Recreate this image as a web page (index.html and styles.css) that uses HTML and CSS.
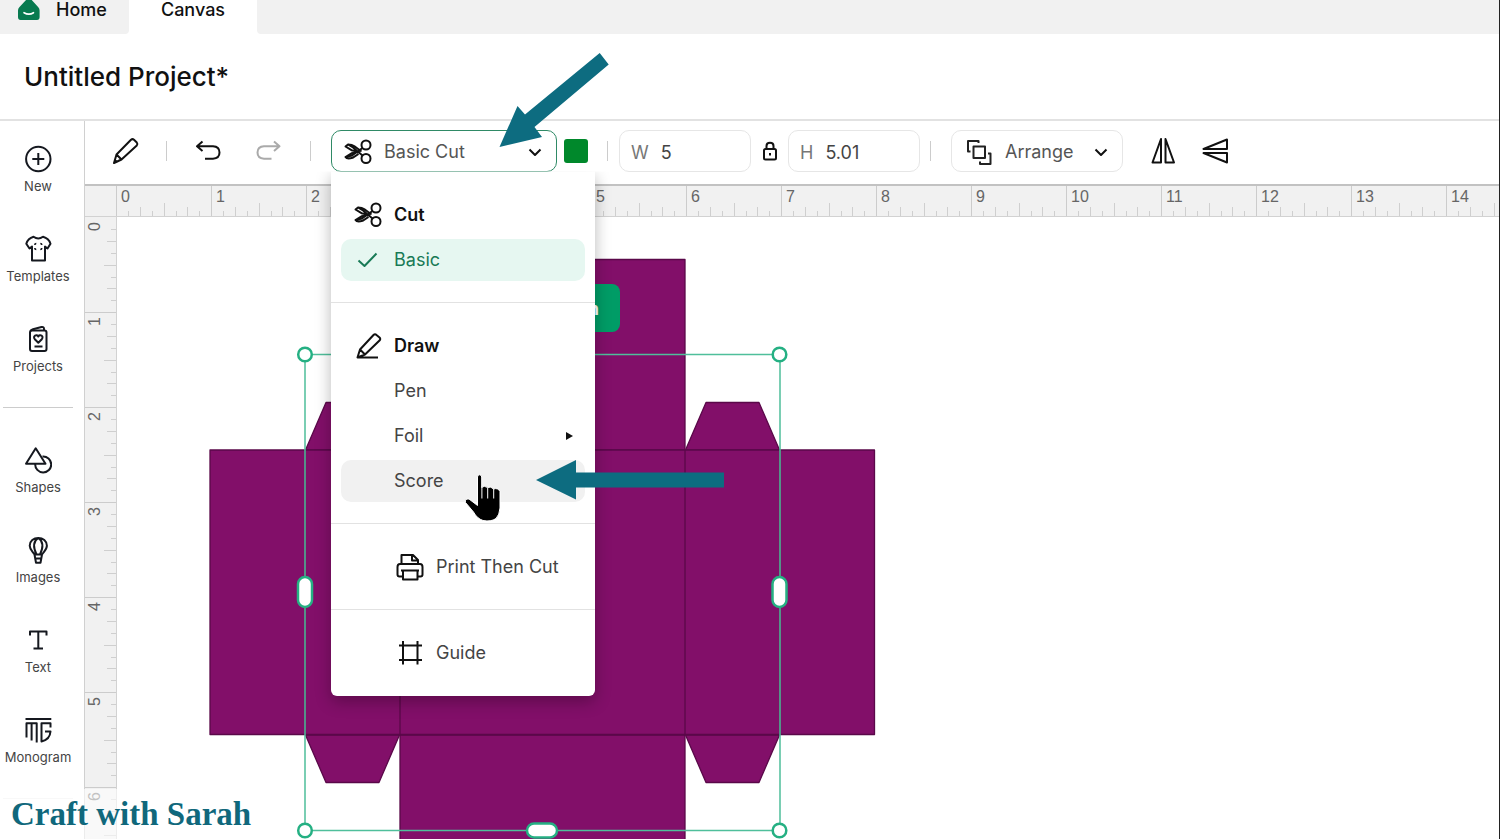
FILE: index.html
```html
<!DOCTYPE html>
<html lang="en">
<head>
<meta charset="utf-8">
<title>Untitled Project</title>
<link rel="stylesheet" href="styles.css">
</head>
<body>
<nav class="tabs" aria-label="Workspace">
  <a class="tab tab-home" href="#home">
    <svg class="home-logo" viewBox="0 0 22 26" aria-hidden="true"><path fill="#087a50" d="M0 16.500Q0 14.500 1.300 13.200L8.500 5.500Q11 3.500 13.300 5.500L20.300 13.200Q21.600 14.500 21.600 16.500V23Q21.600 26 19 26H2.600Q0 26 0 23Z"/><path d="M6 18.700q5 2.800 9.500 0" fill="none" stroke="#fff" stroke-width="1.600" stroke-linecap="round"/></svg>
    Home
  </a>
  <a class="tab tab-active" href="#canvas">Canvas</a>
  <span class="tab-rest"></span>
</nav>
<header class="titlebar"><h1 class="title">Untitled Project*</h1></header>

<div class="workspace">
  <aside class="sidebar">
    <button class="tool"><svg viewBox="0 0 28 28"><circle cx="14.300" cy="14" r="12.200"/><path d="M14.300 8v12M8.300 14h12"/></svg>New</button>
    <button class="tool"><svg viewBox="0 0 28 28"><path d="M8 13v-1.500l-2.500 2L2.300 8.700Q4 3.500 9.500 1.800Q14.300 5.200 19 1.800Q24.800 3.500 26.500 8.700L23.500 13.500L21 11.500V25.500H8Z"/><path stroke-width="1.600" d="M10.800 10q0-1.500 1.500-1.500M16.300 8.500q1.500 0 1.500 1.500M10.800 13q0 1.500 1.500 1.500M16.300 14.500q1.500 0 1.500-1.500"/></svg>Templates</button>
    <button class="tool"><svg viewBox="0 0 28 28"><rect x="6" y="5.500" width="16.500" height="20.500" rx="2"/><path d="M6.500 6Q7 5 9 4.300L17.500 2Q20 1.500 20 4v1.500M10.500 21.500h8M14.300 17.700l-3.500-3.500c-2.500-3.300 2-5.500 3.500-2.700c1.500-2.800 6-.6 3.500 2.700Z"/></svg>Projects</button>
    <hr class="tool-rule">
    <button class="tool"><svg viewBox="0 0 28 28"><path d="M11.700 2.300L2 17.700H21.500Z"/><path d="M18.500 10.500A8 8 0 1 1 11.200 18"/></svg>Shapes</button>
    <button class="tool"><svg viewBox="0 0 28 28"><path d="M10.500 18.500C8.500 15.500 5.700 13.500 5.700 9.800C5.700 5 9.700 2 14.300 2S22.900 5 22.900 9.800C22.900 13.500 20 15.500 18 18.500ZM12.500 18.500C9 11 9.500 5 14.300 2C19 5 19.500 11 16 18.500M10.500 18.500l1.500 8.300h4.500L18 18.500M11.500 22.500h5.500"/></svg>Images</button>
    <button class="tool"><svg viewBox="0 0 28 28"><path d="M6 9.500V5.500H22.500v4M14.300 5.500V22.500M9.500 22.500h9.500"/></svg>Text</button>
    <button class="tool"><svg viewBox="0 0 28 28"><path d="M1.500 3H27.300M2.500 21.500V7.300H12.700V26.500M7.600 24.500V7.300M26.500 11.500V7.300H17.500V25.500Q26 23.500 26.500 15.500H21"/></svg>Monogram</button>
    <hr class="tool-rule tool-rule-faint">
  </aside>

  <main class="main">
    <div class="toolbar">
      <button class="icon-btn" aria-label="Edit"><svg viewBox="0 0 28 28"><path d="M2 26L4.500 17.500L19 2.800Q20.500 1.500 22 2.800L24.800 5.500Q26 7 24.800 8.500L9.500 22.500ZM4.500 17.500L9.500 22.500M3 23l2 2"/></svg></button>
      <span class="sep"></span>
      <button class="icon-btn undo" aria-label="Undo"><svg viewBox="0 0 28 28"><path d="M8.500 4.500L3 9.300L8.500 14M3 9.300H19Q25.500 9.700 25.500 15.500T19 21.700H11"/></svg></button>
      <button class="icon-btn redo" aria-label="Redo"><svg viewBox="0 0 28 28"><path d="M20 4.500L25.500 9.300L20 14M25.500 9.300H10Q3.500 9.700 3.500 15.500T10 21.700H17.500"/></svg></button>
      <span class="sep"></span>
      <div class="operation">
        <button class="select operation-btn" aria-haspopup="menu" aria-expanded="true">
          <svg class="scissors" viewBox="0 0 28 26"><use href="#scissors"/></svg>
          Basic Cut
          <svg class="chevron" viewBox="0 0 14 10"><path d="M1.500 2.500L7 8L12.500 2.500"/></svg>
        </button>
        <div class="menu" role="menu">
          <div class="menu-group">
            <button class="item item-head"><svg class="scissors" viewBox="0 0 28 26"><g id="scissors"><circle cx="22" cy="6" r="4.500"/><circle cx="22" cy="19.500" r="4.500"/><path d="M18.500 9L8 16.500L1.500 18Q3 20.500 8.500 18.800L14.500 15M18.500 16.500L9 8.500L4 5.500L1.500 7.500L7.500 11.200L15 13L7.500 14.300L1.500 18M4 5.500Q8 5.500 10.500 7.300L17.500 12.500"/></g></svg>Cut</button>
            <button class="item item-chosen"><svg viewBox="0 0 28 26"><path d="M4.500 13.500L10.500 19L22.500 6.500"/></svg>Basic</button>
          </div>
          <div class="menu-group">
            <button class="item item-head"><svg viewBox="0 0 28 28"><path d="M3.500 25.500L6 17.500L19.500 3Q21 1.500 22.500 3L25.500 5.500Q27 7 25.500 8.500L11 22.500L3.500 25.500H24M6 17.500L11 22.500"/></svg>Draw</button>
            <button class="item item-text">Pen</button>
            <button class="item item-text">Foil<svg class="more" viewBox="0 0 8 8"><path d="M1 0L8 4L1 8Z"/></svg></button>
            <button class="item item-text item-hover">Score</button>
          </div>
          <div class="menu-group">
            <button class="item item-inset"><svg viewBox="0 0 28 28"><path d="M5.500 10.500V2H17L22 7V10.500M16 2.500V7.500H21.500M6 23.500H3.500Q1.500 23.500 1.500 21.500V14Q1.500 11 4 11H24Q26.500 11 26.500 14V21.500Q26.500 23.500 24.500 23.500H22M5 17.500H23M7 17.500V26.500H21.500V17.500"/></svg>Print Then Cut</button>
          </div>
          <div class="menu-group">
            <button class="item item-inset"><svg viewBox="0 0 28 28"><path d="M3 6.500H26M3 21H26M7 2V25.500M21.500 2V25.500"/></svg>Guide</button>
          </div>
        </div>
      </div>
      <button class="swatch" aria-label="Colour"></button>
      <span class="sep"></span>
      <label class="field">W<input value="5" aria-label="Width"></label>
      <button class="lock" aria-label="Lock proportions"><svg viewBox="0 0 20 24"><rect x="4" y="10" width="12" height="10.500" rx="1.500"/><path d="M6.500 10V7Q6.500 3.800 10 3.800T13.500 7V10M10 14v2.500"/></svg></button>
      <label class="field">H<input value="5.01" aria-label="Height"></label>
      <span class="sep"></span>
      <button class="select arrange">
        <svg class="layers" viewBox="0 0 28 28"><path d="M8.500 8.500H20V20H8.500ZM5.500 13.500H3V3H13.500V5M23 15.500H25.500V26H15V23.500"/></svg>
        Arrange
        <svg class="chevron" viewBox="0 0 14 10"><path d="M1.500 2.500L7 8L12.500 2.500"/></svg>
      </button>
      <button class="icon-btn flip" aria-label="Flip horizontal"><svg viewBox="0 0 28 28"><path d="M13 2V25.500H4.500ZM17.500 2V25.500H26Z"/></svg></button>
      <button class="icon-btn flip" aria-label="Flip vertical"><svg viewBox="0 0 28 28"><path d="M26 2.500V12H2.500ZM26 16V25.500L2.500 16Z"/></svg></button>
    </div>

    <div class="ruler-x">
      <svg class="ticks" aria-hidden="true">
        <defs>
          <pattern id="tx" width="95" height="30" patternUnits="userSpaceOnUse"><path stroke="#cfcfcf" d="M12.500 25v5M24.500 21v9M36.500 25v5M48.500 17v13M60.500 25v5M71.500 21v9M83.500 25v5"/></pattern>
          <pattern id="ty" width="31" height="95" patternUnits="userSpaceOnUse"><path stroke="#cfcfcf" d="M26 12.500h5M22 24.500h9M26 36.500h5M19 48.500h12M26 60.500h5M22 71.500h9M26 83.500h5"/></pattern>
        </defs>
        <rect width="100%" height="100%" fill="url(#tx)"/>
      </svg>
      <span>0</span><span>1</span><span>2</span><span>3</span><span>4</span><span>5</span><span>6</span><span>7</span><span>8</span><span>9</span><span>10</span><span>11</span><span>12</span><span>13</span><span>14</span>
    </div>

    <div class="stage">
      <div class="ruler-y">
        <svg class="ticks" aria-hidden="true"><rect width="100%" height="100%" fill="url(#ty)"/></svg>
        <span><b>0</b></span><span><b>1</b></span><span><b>2</b></span><span><b>3</b></span><span><b>4</b></span><span><b>5</b></span><span><b>6</b></span>
      </div>
      <svg class="artboard" role="img" aria-label="Box template">
        <g transform="translate(-117 -217)">
          <g fill="#820f69" stroke="#5a0849" stroke-width="1.300">
            <path d="M400 259.500H685V450H400ZM400 735H685V850H400Z"/>
            <path d="M305.500 450L326 402.500H379L399.500 450ZM685.500 450L706 402.500H759L779.500 450ZM305.500 735L326 782.500H379L399.500 735ZM685.500 735L706 782.500H759L779.500 735Z"/>
            <path d="M210 450H874.500V734.500H210Z"/>
            <path d="M305 450V735M400 450V735M685 450V735M780 450V735"/>
          </g>
          <rect x="500" y="284" width="120" height="48" rx="8" fill="#009c66"/>
          <text class="badge-text" x="599" y="315" text-anchor="end">n</text>
          <path d="M305 354.500H780V830.500H305Z" fill="none" stroke="#4fbf9b" stroke-width="1.500"/>
          <g fill="#fff" stroke="#25b083" stroke-width="2.500">
            <circle cx="305" cy="354.500" r="6.800"/><circle cx="779.500" cy="354.500" r="6.800"/>
            <circle cx="305" cy="830.500" r="6.800"/><circle cx="779.500" cy="830.500" r="6.800"/>
            <rect x="298" y="577" width="14" height="30" rx="7"/><rect x="772.500" y="577" width="14" height="30" rx="7"/>
            <rect x="527" y="823.500" width="30" height="14" rx="7"/>
          </g>
        </g>
      </svg>
    </div>
  </main>
</div>

<svg class="annotations" aria-hidden="true">
  <g fill="#0d6c80">
    <path d="M499.500 147L517.500 106L525 114.500L599.700 53L608.700 64.500L534.500 127L542 137Z"/>
    <path d="M536 480L576 460V472.500H724V487.500H576V499.500Z"/>
  </g>
  <path fill="#000" stroke="#fff" stroke-width="1" d="M477.500 477Q477.500 474.800 479.500 474.800T481.700 477V487.500Q484 485 487.500 487.500Q491 486 493.500 489Q498 487.500 500 491.500V508Q499.500 515 496 518.500Q491 522 483 520.500Q477 518.500 473.500 512L465.500 502.500Q464.500 498.500 469 499L477.500 505.500Z"/>
  <path stroke="#fff" stroke-width="1" d="M481.900 486.500v12M487.700 488v10.500M493.700 489v9.500"/>
</svg>
<footer class="watermark">Craft with Sarah</footer>
</body>
</html>
```
FILE: styles.css
```css
* { box-sizing: border-box; }

body {
  margin: 0;
  height: 100vh;
  overflow: hidden;
  position: relative;
  display: flex;
  flex-direction: column;
  background: #fff;
  border-right: 1px solid #222;
  color: #111;
  font: 18px/20px Inter, "Liberation Sans", sans-serif;
}

button {
  padding: 0;
  border: 0;
  background: none;
  color: inherit;
  font: inherit;
}

svg { flex: none; fill: none; stroke-linejoin: round; }

/* Header */
.tabs { display: flex; height: 34px; background: #fff; }
.tab { display: flex; color: #111; font-weight: 500; line-height: 20px; text-decoration: none; }
.tab-home { width: 129px; gap: 16px; padding-left: 18px; background: #f1f1f1; border-bottom-right-radius: 4px; }
.home-logo { width: 22px; height: 26px; margin-top: -6px; }
.tab-active { width: 128px; justify-content: center; }
.tab-rest { flex: 1; background: #f1f1f1; border-bottom-left-radius: 4px; }
.titlebar { display: flex; align-items: center; height: 87px; padding-left: 24px; border-bottom: 2px solid #e2e2e2; }
.title { margin: 0; font-size: 26px; font-weight: 500; line-height: 32px; }

.workspace { display: flex; flex: 1; min-height: 0; }

/* Sidebar */
.sidebar {
  flex: none;
  display: flex;
  flex-direction: column;
  width: 85px;
  padding: 24px 8px 0 0;
  border-right: 1px solid #d0d0d0;
}
.tool {
  display: flex;
  flex-direction: column;
  align-items: center;
  gap: 3px;
  margin-bottom: 39px;
  color: #444;
  font-size: 13px;
}
.tool svg { width: 28px; height: 28px; stroke: #15181f; stroke-width: 2; }
.tool-rule { width: 70px; margin: -8px 0 38px 3px; border: 0; border-top: 1px solid #ccc; }
.tool-rule-faint { border-color: #eee; }

/* Toolbar */
.main { flex: 1; min-width: 0; display: flex; flex-direction: column; }
.toolbar {
  position: relative;
  z-index: 2;
  display: flex;
  align-items: center;
  height: 65px;
  padding: 0 0 4px 27px;
  border-bottom: 2px solid #c2c2c2;
}
.icon-btn svg { display: block; width: 28px; height: 28px; stroke: #111; stroke-width: 2; }
.sep { width: 1px; height: 20px; margin: 0 20px 0 26px; background: #ccc; }
.undo { margin: 0 32px 0 7px; }
.redo { margin-right: 2px; }
.redo svg { stroke: #aaa; }
.operation { position: relative; }
.select {
  display: flex;
  align-items: center;
  height: 42px;
  border: 1px solid #e6e6e6;
  border-radius: 10px;
  background: #fff;
  color: #555;
}
.operation-btn { width: 226px; gap: 12px; padding: 2px 14px 0 12px; border-color: #2f8a66; }
.scissors { width: 28px; height: 26px; stroke: #111; stroke-width: 2; }
.chevron { width: 14px; height: 10px; margin-left: auto; stroke: #111; stroke-width: 2; }
.swatch { width: 24px; height: 24px; margin-left: 7px; border-radius: 3px; background: #00882b; }
.swatch + .sep { margin: 0 11px 0 19px; }
.field {
  display: flex;
  align-items: center;
  gap: 12px;
  width: 132px;
  height: 42px;
  padding: 4px 11px 0;
  border: 1px solid #e6e6e6;
  border-radius: 10px;
  color: #777;
}
.field input {
  flex: 1;
  min-width: 0;
  padding: 0;
  border: 0;
  background: none;
  color: #444;
  font: inherit;
}
.lock { margin: 0 8px 0 9px; }
.lock svg { display: block; width: 20px; height: 24px; stroke: #111; stroke-width: 2; }
.field + .sep { margin: 0 20px 0 10px; }
.arrange { width: 172px; gap: 12px; padding: 2px 14px 0 13px; }
.layers { width: 28px; height: 28px; stroke: #222; stroke-width: 2; }
.flip { margin-left: 25px; }

/* Operation menu */
.menu {
  position: absolute;
  top: 41px;
  left: 0;
  width: 264px;
  padding-top: 1px;
  border-radius: 0 0 6px 6px;
  background: #fff;
  box-shadow: 0 6px 16px rgba(0, 0, 0, 0.28);
  clip-path: inset(1px -40px -40px -40px);
}
.menu-group { display: flex; flex-direction: column; gap: 3px; padding: 22px 10px 21px; }
.menu-group + .menu-group { border-top: 1px solid #e2e2e2; }
.menu-group:last-child { padding-bottom: 22px; }
.item {
  display: flex;
  align-items: center;
  gap: 12px;
  height: 42px;
  padding: 0 12px 0 13px;
  border-radius: 10px;
  color: #444;
}
.item svg { width: 28px; height: 28px; stroke: #111; stroke-width: 2; }
.item-head { color: #111; font-weight: 600; }
.item-chosen { background: #e6f7f1; color: #187a56; }
.item-chosen svg { stroke: #187a56; }
.item-text { padding-left: 53px; }
.item-hover { background: #f1f1f1; }
.item .more { width: 8px; height: 8px; margin-left: auto; fill: #111; stroke: none; }
.item-inset { padding-left: 55px; }

/* Rulers and canvas */
.ruler-x, .ruler-y {
  position: relative;
  flex: none;
  display: flex;
  overflow: hidden;
  background: #f1f1f1;
  color: #666;
  font: 16px/20px "Liberation Sans", Arial, sans-serif;
}
.ruler-x { height: 31px; padding-left: 31px; border-bottom: 1px solid #d2d2d2; }
.ruler-x span { flex: none; width: 95px; padding: 1px 4px; border-left: 1px solid #ccc; }
.ticks { position: absolute; top: 0; left: 0; width: 100%; height: 100%; }
.ruler-x .ticks { left: 31px; }
.stage { flex: 1; min-height: 0; display: flex; }
.ruler-y { flex-direction: column; width: 32px; border-right: 1px solid #d2d2d2; }
.ruler-y span { flex: none; height: 95px; border-top: 1px solid #ccc; }
.ruler-y span:first-of-type { border-top-color: transparent; }
.ruler-y b { display: block; padding: 4px 0; font-weight: 400; writing-mode: vertical-rl; transform: rotate(180deg); width: 20px; }
.artboard { flex: 1; min-width: 0; height: 100%; }
.badge-text { fill: #fff; font-size: 18px; font-weight: 700; }

/* Overlays */
.annotations {
  position: absolute;
  inset: 0;
  z-index: 3;
  width: 100%;
  height: 100%;
  pointer-events: none;
}
.watermark {
  position: absolute;
  left: 0;
  bottom: 0;
  z-index: 4;
  width: 260px;
  height: 50px;
  padding: 9px 0 0 11px;
  background: rgba(255, 255, 255, 0.6);
  color: #10687c;
  font: bold 33px/32px "Liberation Serif", "Times New Roman", serif;
  white-space: nowrap;
}
```
